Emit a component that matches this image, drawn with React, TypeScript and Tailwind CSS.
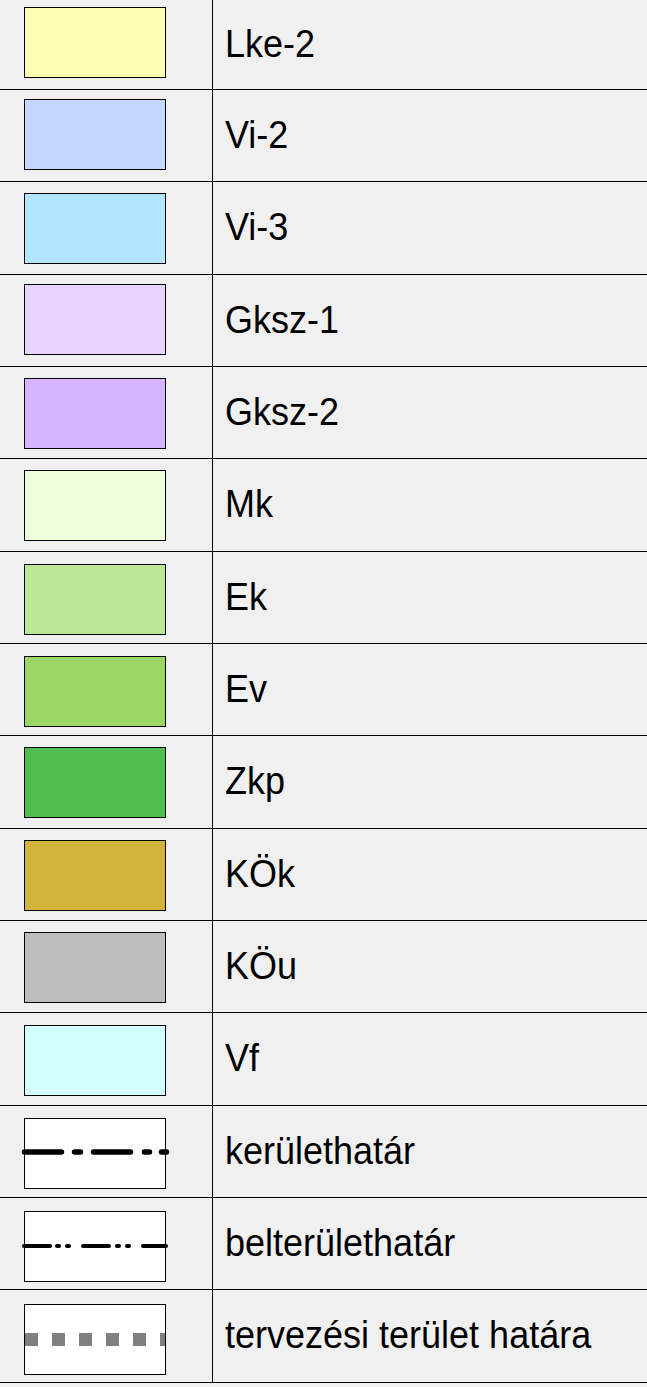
type LegendRow = {
  label: string;
  fill: string;
  h: string;
  pt: string;
  line?: "district" | "inner" | "plan";
};

// row heights and swatch offsets follow the scanned legend, which drifts a little
const rows: LegendRow[] = [
  { label: "Lke-2", fill: "bg-[#ffffb4]", h: "h-[90px]", pt: "pt-[7px]" },
  { label: "Vi-2", fill: "bg-[#c4d7ff]", h: "h-[92px]", pt: "pt-[9px]" },
  { label: "Vi-3", fill: "bg-[#b2e5ff]", h: "h-[93px]", pt: "pt-[11px]" },
  { label: "Gksz-1", fill: "bg-[#e8d4ff]", h: "h-[92px]", pt: "pt-[9px]" },
  { label: "Gksz-2", fill: "bg-[#d7b4ff]", h: "h-[92px]", pt: "pt-[11px]" },
  { label: "Mk", fill: "bg-[#eeffdc]", h: "h-[93px]", pt: "pt-[11px]" },
  { label: "Ek", fill: "bg-[#b9e996]", h: "h-[92px]", pt: "pt-[12px]" },
  { label: "Ev", fill: "bg-[#9bd764]", h: "h-[92px]", pt: "pt-[12px]" },
  { label: "Zkp", fill: "bg-[#4fbe4f]", h: "h-[93px]", pt: "pt-[11px]" },
  { label: "KÖk", fill: "bg-[#d2b43c]", h: "h-[92px]", pt: "pt-[11px]" },
  { label: "KÖu", fill: "bg-[#bebebe]", h: "h-[92px]", pt: "pt-[11px]" },
  { label: "Vf", fill: "bg-[#d2ffff]", h: "h-[93px]", pt: "pt-[12px]" },
  { label: "kerülethatár", fill: "bg-white", h: "h-[92px]", pt: "pt-[12px]", line: "district" },
  { label: "belterülethatár", fill: "bg-white", h: "h-[92px]", pt: "pt-[13px]", line: "inner" },
  { label: "tervezési terület határa", fill: "bg-white", h: "h-[93px]", pt: "pt-[14px]", line: "plan" },
];

// segments in page x, from the reference
const districtSegs = [[22, 64], [72, 83], [91, 133], [142, 152], [159, 169]];
const innerSegs = [[22, 52], [55, 61], [65, 71], [81, 111], [115, 121], [125, 131], [141, 168]];
const planSquares = [25, 52, 79, 106, 133, 160];

function LinePattern({ kind }: { kind: NonNullable<LegendRow["line"]> }) {
  return (
    <svg
      className="absolute left-[-5px] top-0 overflow-visible"
      width={150}
      height={69}
      viewBox="20 0 150 69"
    >
      {kind === "district" &&
        districtSegs.map(([a, b]) => (
          <line key={a} x1={a + 2.5} x2={b - 2.5} y1={33} y2={33} stroke="#000" strokeWidth={5.5} strokeLinecap="round" />
        ))}
      {kind === "inner" &&
        innerSegs.map(([a, b]) => (
          <line key={a} x1={a + 2} x2={b - 2} y1={34} y2={34} stroke="#000" strokeWidth={4} strokeLinecap="round" />
        ))}
      {kind === "plan" &&
        planSquares.map((x) => (
          <rect key={x} x={x} y={28} width={Math.min(13, 165 - x)} height={13} fill="#808080" />
        ))}
    </svg>
  );
}

export default function App() {
  return (
    <div className="w-[647px] h-[1387px] bg-[#f0f0f0] overflow-hidden font-['Liberation_Sans',Arial,sans-serif] text-black">
      {rows.map((row) => (
        <div key={row.label} className={`flex border-b border-black ${row.h}`}>
          <div className={`w-[213px] shrink-0 border-r border-black pl-[24px] ${row.pt}`}>
            <div className={`relative w-[142px] h-[71px] border border-black ${row.fill}`}>
              {row.line && <LinePattern kind={row.line} />}
            </div>
          </div>
          <div className="flex-1 flex items-center pl-[12px]">
            <span className="text-[36px] leading-none scale-y-[1.08] -translate-y-[1px]">{row.label}</span>
          </div>
        </div>
      ))}
    </div>
  );
}
